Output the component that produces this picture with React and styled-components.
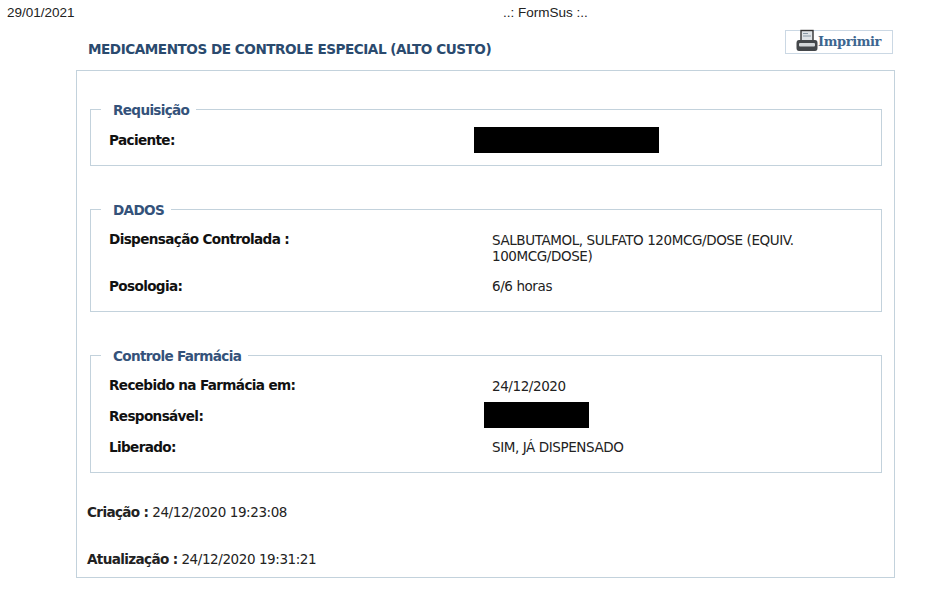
import React from 'react';
import styled, { createGlobalStyle } from 'styled-components';

const Global = createGlobalStyle`
  html, body { margin: 0; padding: 0; background: #fff; }
  body { font-family: "DejaVu Sans", Tahoma, sans-serif; color: #111; }
`;
const Page = styled.div`
  width: 932px; height: 594px; overflow: hidden; display: flex; flex-direction: column;
`;
const TopBar = styled.div`
  display: flex; height: 26px; padding: 5px 0 0 7px; box-sizing: border-box;
  font: 13.5px/15px "Liberation Sans", Arial, sans-serif; color: #222;
`;
const DateText = styled.span`
  width: 496px;
`;
const Header = styled.div`
  display: flex; justify-content: space-between; align-items: flex-start;
  height: 44px; padding: 4px 39px 0 88px; box-sizing: border-box;
`;
const Title = styled.h1`
  margin: 11px 0 0; font: bold 13.6px/16px "DejaVu Sans", sans-serif; color: #2a4a6e; letter-spacing: -0.48px;
`;
const PrintButton = styled.button`
  width: 108px; height: 24px; padding: 0 0 0 10px; margin: 0; background: #fff; border: 1px solid #cbd8e4; box-sizing: border-box;
  display: flex; align-items: center; gap: 0; font: bold 13px/16px "DejaVu Serif", serif; color: #3d6690; letter-spacing: -0.4px;
`;
const Panel = styled.div`
  margin-left: 76px; width: 819px; height: 508px; box-sizing: border-box; border: 1px solid #c3d2dc;
  padding: 28px 12px 0 13px; display: flex; flex-direction: column;
`;
const Section = styled.fieldset`
  margin: 0 0 ${p => p.$gap}px; padding: 0 18px; min-width: 0; border: 1px solid #c3d2dc; height: ${p => p.$h}px; box-sizing: border-box;
`;
const Legend = styled.legend`
  margin-left: -8px; padding: 3px 7px 1px 12px; font: bold 13.6px/17px "DejaVu Sans", sans-serif; color: #34527a; letter-spacing: -0.68px;
`;
const Row = styled.div`
  display: grid; grid-template-columns: 383px 1fr; height: ${p => p.$h}px; align-items: start; margin-top: ${p => p.$mt || 0}px;
`;
const Label = styled.div`
  font: bold 13.6px/16px "DejaVu Sans", sans-serif; color: #111; letter-spacing: -0.65px; padding-top: ${p => p.$top || 0}px;
`;
const Value = styled.div`
  font: 13.5px/16px "DejaVu Sans", sans-serif; color: #222; letter-spacing: -0.41px; width: 340px; padding-top: ${p => p.$top || 0}px;
`;
const Redacted = styled.div`
  background: #000; width: ${p => p.$w}px; height: 26px; margin-left: ${p => p.$x}px;
`;
const Footer = styled.p`
  margin: 0 0 0 -3px; height: ${p => p.$h}px; font: 13.5px/16px "DejaVu Sans", sans-serif; color: #222; letter-spacing: -0.42px;
  b { font: bold 13.6px/16px "DejaVu Sans", sans-serif; color: #222; letter-spacing: -0.65px; }
`;
const PrinterSvg = styled.svg`
  margin-top: -3px; flex: none;
`;

const PrinterIcon = () => (
  <PrinterSvg width="22" height="23" viewBox="0 0 22 23" aria-hidden="true">
    <rect x="5" y="1.5" width="12" height="11" fill="#dfe3e6" stroke="#333" strokeWidth="1.4" />
    <path d="M7 4.5h5M7 7h8" stroke="#8a99a5" strokeWidth="1" />
    <path d="M3 11 H19 Q21.5 11 21.5 14 V19 Q21.5 22 19 22 H3 Q0.5 22 0.5 19 V14 Q0.5 11 3 11Z" fill="#44474a" />
    <rect x="3" y="14" width="16" height="3.5" rx="1" fill="#d3d6d8" />
  </PrinterSvg>
);

export default function App() {
  return (
    <Page>
      <Global />
      <TopBar>
        <DateText>29/01/2021</DateText>
        <span>..: FormSus :..</span>
      </TopBar>
      <Header>
        <Title>MEDICAMENTOS DE CONTROLE ESPECIAL (ALTO CUSTO)</Title>
        <PrintButton type="button"><PrinterIcon />Imprimir</PrintButton>
      </Header>
      <Panel>
        <Section $h={67} $gap={33}>
          <Legend>Requisição</Legend>
          <Row $h={26} $mt={7}>
            <Label $top={5}>Paciente:</Label>
            <Redacted $w={185} $x={-18} />
          </Row>
        </Section>
        <Section $h={113} $gap={33}>
          <Legend>DADOS</Legend>
          <Row $h={58}>
            <Label $top={11}>Dispensação Controlada :</Label>
            <Value $top={12}>SALBUTAMOL, SULFATO 120MCG/DOSE (EQUIV. 100MCG/DOSE)</Value>
          </Row>
          <Row $h={20}>
            <Label>Posologia:</Label>
            <Value>6/6 horas</Value>
          </Row>
        </Section>
        <Section $h={128} $gap={31}>
          <Legend>Controle Farmácia</Legend>
          <Row $h={36}>
            <Label $top={11}>Recebido na Farmácia em:</Label>
            <Value $top={12}>24/12/2020</Value>
          </Row>
          <Row $h={37}>
            <Label $top={6}>Responsável:</Label>
            <Redacted $w={105} $x={-8} />
          </Row>
          <Row $h={20}>
            <Label>Liberado:</Label>
            <Value>SIM, JÁ DISPENSADO</Value>
          </Row>
        </Section>
        <Footer $h={47}><b>Criação :</b> 24/12/2020 19:23:08</Footer>
        <Footer $h={20}><b>Atualização :</b> 24/12/2020 19:31:21</Footer>
      </Panel>
    </Page>
  );
}
